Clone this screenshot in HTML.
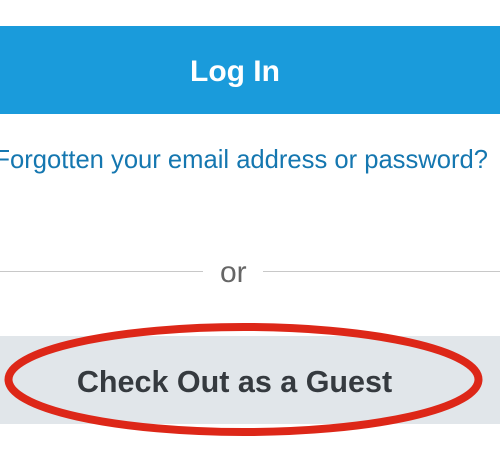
<!DOCTYPE html>
<html><head><style>
body{margin:0;width:500px;height:452px;background:#fff;overflow:hidden;position:relative;font-family:"Liberation Sans",Arial,sans-serif}
.b{position:absolute;left:0;width:500px;text-align:center;font-weight:bold}
</style></head><body>
<div class="b" style="top:26px;height:88px;background:#1a9bdb;color:#fff;font-size:30px;line-height:92px;text-indent:-30px">Log In</div>
<div style="position:absolute;right:12px;top:144px;white-space:nowrap;color:#1577b0;font-size:25.6px;line-height:32px">Forgotten your email address or password?</div>
<div style="position:absolute;left:0;width:203px;top:271px;height:1px;background:#c8c8c8"></div>
<div style="position:absolute;left:263px;width:237px;top:271px;height:1px;background:#c8c8c8"></div>
<div style="position:absolute;left:220px;top:256px;color:#666;font-size:30px;line-height:34px">or</div>
<div class="b" style="top:336px;height:88px;background:#e1e6ea;color:#353a3f;font-size:30.5px;line-height:92px;text-indent:-31px">Check Out as a Guest</div>
<svg style="position:absolute;left:0;top:0" width="500" height="452"><ellipse cx="243.5" cy="379.5" rx="235" ry="52.5" fill="none" stroke="#dd2718" stroke-width="8"/></svg>
</body></html>
